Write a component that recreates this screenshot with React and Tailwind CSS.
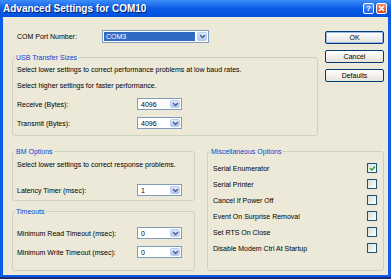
import React from "react";

const F = "font-['Liberation_Sans',Arial,sans-serif]";

function Chevron() {
  return (
    <svg width="7" height="5" viewBox="0 0 7 5">
      <path d="M1 1 L3.5 3.5 L6 1" fill="none" stroke="#4D6185" strokeWidth="1.4" />
    </svg>
  );
}

function Combo({ value, w = "w-[45px]", h = "h-[12px]", selected = false }) {
  return (
    <div className={`flex ${w} ${h} items-stretch border border-[#7F9DB9] bg-white`}>
      <div className="flex flex-1 items-center p-[1px]">
        <span
          className={`flex h-full flex-1 items-center pl-[2px] text-[7px] leading-none ${
            selected ? "bg-[#316AC5] text-white" : "text-black"
          }`}
        >
          {value}
        </span>
      </div>
      <div className="m-[1px] flex w-[10px] items-center justify-center rounded-[2px] border border-[#B8CBF3] bg-gradient-to-b from-[#E0E9FD] to-[#B3C8F5]">
        <Chevron />
      </div>
    </div>
  );
}

function Button({ children, def = false }) {
  return (
    <div
      className={`flex h-[13px] w-[59px] items-center justify-center rounded-[2px] border border-[#003C74] bg-gradient-to-b from-white to-[#E6E3DA] text-[7px] leading-none text-black ${
        def ? "shadow-[inset_0_0_0_1px_#9DB9EB]" : ""
      }`}
    >
      {children}
    </div>
  );
}

function Group({ title, className = "", children }) {
  return (
    <fieldset className={`rounded-[3px] border border-[#D0D0BF] ${className}`}>
      <legend className="ml-[2px] px-[1px] text-[7px] leading-[9px] text-[#0046D5]">{title}</legend>
      {children}
    </fieldset>
  );
}

function Row({ label, value, className = "" }) {
  return (
    <div className={`flex h-[12px] items-center ${className}`}>
      <span className="w-[124px] pl-[4px] text-[7px] leading-none">{label}</span>
      <Combo value={value} />
    </div>
  );
}

function Check({ label, checked }) {
  return (
    <div className="flex h-[16px] items-center justify-between pl-[5px] pr-[6px]">
      <span className="text-[7px] leading-none">{label}</span>
      <div className="flex h-[10px] w-[10px] items-center justify-center border border-[#1C5180] bg-gradient-to-br from-[#DCDCD7] to-white">
        {checked && (
          <svg width="7" height="7" viewBox="0 0 7 7">
            <path d="M1 3.2 L2.8 5 L6 1.6" fill="none" stroke="#21A121" strokeWidth="1.5" />
          </svg>
        )}
      </div>
    </div>
  );
}

export default function App() {
  return (
    <div className={`flex h-[279px] w-[391px] flex-col overflow-hidden ${F} text-black`}>
      {/* Title bar */}
      <div className="flex h-[17px] items-center justify-between bg-gradient-to-b from-[#3C8CF8] via-[#0A5CE6] to-[#0050DC] pl-[3px] pr-[4px]">
        <span className="text-[10px] font-bold leading-none text-white [text-shadow:1px_1px_0_#0A1E6E]">
          Advanced Settings for COM10
        </span>
        <div className="flex gap-[2px]">
          <div className="flex h-[11px] w-[11px] items-center justify-center rounded-[2px] border border-white bg-gradient-to-b from-[#5A9BFF] to-[#1B5EE8] text-[8px] font-bold leading-none text-white">
            ?
          </div>
          <div className="flex h-[11px] w-[11px] items-center justify-center rounded-[2px] border border-white bg-gradient-to-b from-[#F08B6A] to-[#D8401C]">
            <svg width="7" height="7" viewBox="0 0 7 7">
              <path d="M1 1 L6 6 M6 1 L1 6" stroke="white" strokeWidth="1.6" />
            </svg>
          </div>
        </div>
      </div>

      {/* Body */}
      <div className="flex flex-1 flex-col border-x-[3px] border-[#0B5AE8] bg-[#ECE9D8] pl-[9px] pr-[4px] pt-[13px]">
        <div className="flex items-start">
          <div className="flex w-[306px] flex-col">
            <div className="flex h-[13px] items-center">
              <span className="w-[90px] pl-[5px] text-[7px] leading-none">COM Port Number:</span>
              <Combo value="COM3" w="w-[107px]" h="h-[13px]" selected />
            </div>
            <Group title="USB Transfer Sizes" className="mt-[10px] pb-[6px]">
              <p className="mt-[3px] pl-[4px] text-[7px] leading-[9px]">
                Select lower settings to correct performance problems at low baud rates.
              </p>
              <p className="mt-[7px] pl-[4px] text-[7px] leading-[9px]">
                Select higher settings for faster performance.
              </p>
              <Row label="Receive (Bytes):" value="4096" className="mt-[8px]" />
              <Row label="Transmit (Bytes):" value="4096" className="mt-[7px]" />
            </Group>
          </div>
          <div className="ml-[7px] flex flex-col gap-[6px] pt-[1px]">
            <Button def>OK</Button>
            <Button>Cancel</Button>
            <Button>Defaults</Button>
          </div>
        </div>

        <div className="mt-[11px] flex items-stretch">
          <div className="flex w-[183px] flex-col">
            <Group title="BM Options" className="pb-[4px]">
              <p className="mt-[4px] pl-[4px] text-[7px] leading-[9px]">
                Select lower settings to correct response problems.
              </p>
              <Row label="Latency Timer (msec):" value="1" className="mt-[15px]" />
            </Group>
            <Group title="Timeouts" className="mt-[6px] pb-[12px]">
              <Row label="Minimum Read Timeout (msec):" value="0" className="mt-[11px]" />
              <Row label="Minimum Write Timeout (msec):" value="0" className="mt-[7px]" />
            </Group>
          </div>
          <Group title="Miscellaneous Options" className="ml-[12px] w-[177px]">
            <div className="mt-[4px] flex flex-col">
              <Check label="Serial Enumerator" checked />
              <Check label="Serial Printer" />
              <Check label="Cancel If Power Off" />
              <Check label="Event On Surprise Removal" />
              <Check label="Set RTS On Close" />
              <Check label="Disable Modem Ctrl At Startup" />
            </div>
          </Group>
        </div>
        <div className="flex-1" />
      </div>
      <div className="h-[2px] bg-[#0B5AE8]" />
      <div className="h-[2px] bg-[#1A2C78]" />
    </div>
  );
}
